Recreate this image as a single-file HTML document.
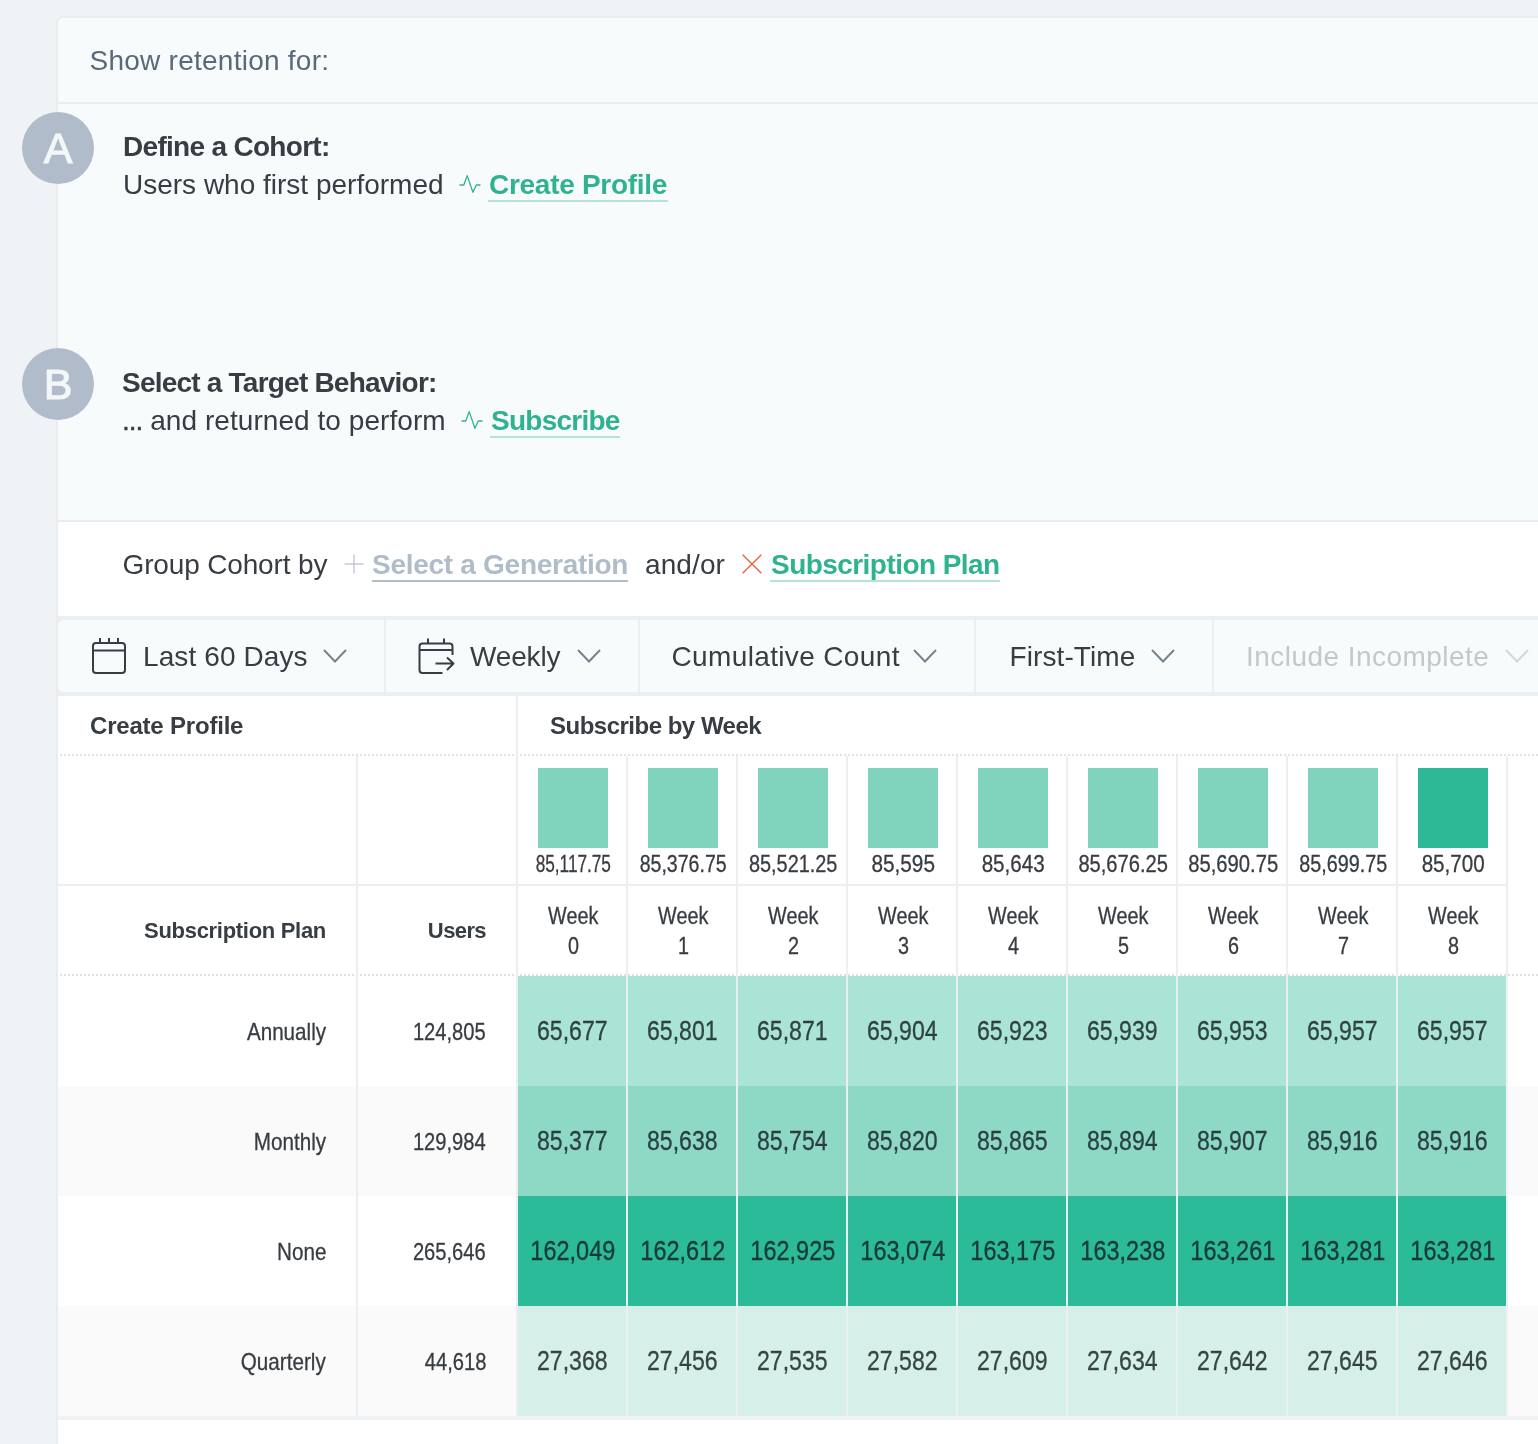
<!DOCTYPE html><html><head><meta charset="utf-8"><title>Retention</title><style>
*{box-sizing:border-box;margin:0;padding:0}
html,body{width:1538px;height:1444px;overflow:hidden}
body{background:#f0f3f5;font-family:"Liberation Sans",Arial,sans-serif;color:#373d42;position:relative;font-size:28px}
.abs{position:absolute}
.t{position:absolute;white-space:nowrap;line-height:1}
.panel{position:absolute;left:56px;top:16px;width:1500px;height:1500px;border:2px solid #e9edf0;border-radius:7px 0 0 0;background:#f8fbfc;overflow:hidden}
.hline{position:absolute;left:58px;right:0;height:2px;background:#e9edf0}
.white{position:absolute;left:58px;right:0;background:#fff}
.circle{position:absolute;left:22px;width:72px;height:72px;border-radius:50%;background:#b0bcc9;color:#f4f7f9;font-size:43px;text-align:center;line-height:73px;-webkit-text-stroke:1.1px #f4f7f9}
.b{font-weight:bold}
.green{color:#2fb28e}
.ul{position:absolute;height:2px}
.cn{display:inline-block;transform-origin:center center;white-space:nowrap;-webkit-text-stroke:0.3px currentColor}
.vl{position:absolute;width:2px;background:#eceff2}
.dot{position:absolute;height:2px;background-image:repeating-linear-gradient(90deg,transparent 0 2px,#dee1e5 2px 4px)}
.cell{position:absolute;width:108px;height:110px;padding-left:1px;text-align:center;line-height:110px;font-size:27px;color:rgba(22,32,36,.82)}
.c{position:absolute;text-align:center;white-space:nowrap}
.r{position:absolute;text-align:right;white-space:nowrap}
</style></head><body>
<div id="wrap" style="position:absolute;left:0;top:0;width:1538px;height:1444px;will-change:transform">
<div class="panel"></div>
<div class="t" style="left:89.5px;top:47px;color:#596979;letter-spacing:0.25px">Show retention for:</div>
<div class="hline" style="top:102px"></div>
<div class="circle" style="top:112px">A</div>
<div class="t b" style="left:123px;top:133px;letter-spacing:-0.7px">Define a Cohort:</div>
<div class="t" style="left:123px;top:171px">Users who first performed</div>
<svg class="abs" style="left:459px;top:174px" width="24" height="22" viewBox="0 0 24 22"><path d="M1 11 H4.8 L8.2 1.6 L13.9 18.3 L17.3 11 H21" fill="none" stroke="#2fb28e" stroke-width="1.3" stroke-linejoin="round" stroke-linecap="round"/></svg>
<div class="t b green" style="left:489px;top:171px;letter-spacing:-0.28px">Create Profile</div>
<div class="ul" style="left:488px;width:180px;top:200px;background:#b5e4d6"></div>
<div class="circle" style="top:348px">B</div>
<div class="t b" style="left:122px;top:369px;letter-spacing:-0.78px">Select a Target Behavior:</div>
<div class="t" style="left:122px;top:407px"><span style="letter-spacing:-1px;-webkit-text-stroke:0.4px currentColor">...</span><span style="letter-spacing:0.06px"> and returned to perform</span></div>
<svg class="abs" style="left:461px;top:410px" width="24" height="22" viewBox="0 0 24 22"><path d="M1 11 H4.8 L8.2 1.6 L13.9 18.3 L17.3 11 H21" fill="none" stroke="#2fb28e" stroke-width="1.3" stroke-linejoin="round" stroke-linecap="round"/></svg>
<div class="t b green" style="left:491px;top:407px;letter-spacing:-0.75px">Subscribe</div>
<div class="ul" style="left:490px;width:130px;top:436px;background:#b5e4d6"></div>
<div class="hline" style="top:520px"></div>
<div class="white" style="top:522px;height:94px"></div>
<div class="t" style="left:122.5px;top:551px;letter-spacing:-0.15px">Group Cohort by</div>
<svg class="abs" style="left:344px;top:554px" width="20" height="20" viewBox="0 0 20 20"><path d="M10 0.5V19.5M0.5 10H19.5" stroke="#c3ccd4" stroke-width="1.5" fill="none"/></svg>
<div class="t b" style="left:372px;top:551px;color:#b0bcc9;letter-spacing:-0.28px">Select a Generation</div>
<div class="ul" style="left:372px;width:256px;top:580px;background:#b0bcc9"></div>
<div class="t" style="left:645px;top:551px;letter-spacing:0.1px">and/or</div>
<svg class="abs" style="left:742px;top:554px" width="20" height="20" viewBox="0 0 20 20"><path d="M0.7 0.7L19.3 19.3M19.3 0.7L0.7 19.3" stroke="#e9633d" stroke-width="1.4" fill="none"/></svg>
<div class="t b green" style="left:771px;top:551px;letter-spacing:-0.55px">Subscription Plan</div>
<div class="ul" style="left:770px;width:230px;top:580px;background:#b5e4d6"></div>
<div class="abs" style="left:58px;top:616px;right:0;height:80px;background:#eceff2"></div>
<div class="abs" style="left:58px;top:620px;right:0;height:72px;background:#f8fbfc;border-radius:6px 0 0 6px"></div>
<div class="abs" style="left:384px;top:620px;width:2px;height:72px;background:#eceff2"></div>
<div class="abs" style="left:638px;top:620px;width:2px;height:72px;background:#eceff2"></div>
<div class="abs" style="left:974px;top:620px;width:2px;height:72px;background:#eceff2"></div>
<div class="abs" style="left:1212px;top:620px;width:2px;height:72px;background:#eceff2"></div>
<svg class="abs" style="left:90px;top:636px" width="38" height="40" viewBox="0 0 38 40"><g fill="none" stroke="#373d42" stroke-width="2"><rect x="3" y="7" width="32" height="30" rx="3"/><path d="M3 14.5H35M10 2V7M19 2V7M28 2V7"/></g></svg>
<div class="t" style="left:143px;top:643px;letter-spacing:0.1px">Last 60 Days</div>
<svg class="abs" style="left:323px;top:649px" width="24" height="14" viewBox="0 0 24 14"><path d="M1 1L12 12.5L23 1" fill="none" stroke="#76838f" stroke-width="2" stroke-linejoin="miter"/></svg>
<svg class="abs" style="left:416px;top:636px" width="40" height="40" viewBox="0 0 40 40"><g fill="none" stroke="#373d42" stroke-width="2" stroke-linejoin="round"><path d="M26.5 37H6.5Q3.5 37 3.5 34V10.5Q3.5 7.5 6.5 7.5H33.5Q36.5 7.5 36.5 10.5V19"/><path d="M3.5 14H36.5M12 2.5V7.5M28 2.5V7.5M19.5 27.5H37M31 21.5L37.5 27.5L31 34"/></g></svg>
<div class="t" style="left:470px;top:643px;letter-spacing:-0.15px">Weekly</div>
<svg class="abs" style="left:577px;top:649px" width="24" height="14" viewBox="0 0 24 14"><path d="M1 1L12 12.5L23 1" fill="none" stroke="#76838f" stroke-width="2" stroke-linejoin="miter"/></svg>
<div class="t" style="left:671.5px;top:643px;letter-spacing:0.36px">Cumulative Count</div>
<svg class="abs" style="left:913px;top:649px" width="24" height="14" viewBox="0 0 24 14"><path d="M1 1L12 12.5L23 1" fill="none" stroke="#76838f" stroke-width="2" stroke-linejoin="miter"/></svg>
<div class="t" style="left:1009.5px;top:643px;letter-spacing:0.1px">First-Time</div>
<svg class="abs" style="left:1151px;top:649px" width="24" height="14" viewBox="0 0 24 14"><path d="M1 1L12 12.5L23 1" fill="none" stroke="#76838f" stroke-width="2" stroke-linejoin="miter"/></svg>
<div class="t" style="left:1246px;top:643px;letter-spacing:0.46px;color:#c3c8cc">Include Incomplete</div>
<svg class="abs" style="left:1505px;top:649px" width="24" height="14" viewBox="0 0 24 14"><path d="M1 1L12 12.5L23 1" fill="none" stroke="#d3d8dc" stroke-width="2" stroke-linejoin="miter"/></svg>
<div class="white" style="top:696px;height:720px"></div>
<div class="abs" style="left:58px;right:0;top:1416px;height:4px;background:#eff2f4"></div>
<div class="white" style="top:1420px;height:30px"></div>
<div class="abs" style="left:58px;right:0;top:1086px;height:110px;background:#fafafa"></div>
<div class="abs" style="left:58px;right:0;top:1306px;height:110px;background:#fafafa"></div>
<div class="t b" style="left:90px;top:714px;font-size:24px;letter-spacing:-0.2px">Create Profile</div>
<div class="t b" style="left:550px;top:714px;font-size:24px;letter-spacing:-0.5px">Subscribe by Week</div>
<div class="dot" style="left:58px;right:0;top:754px"></div>
<div class="abs" style="left:58px;width:1450px;top:884px;height:2px;background:#eceff2"></div>
<div class="dot" style="left:58px;right:0;top:974px"></div>
<div class="vl" style="left:356px;top:756px;height:660px"></div>
<div class="vl" style="left:516px;top:696px;height:720px"></div>
<div class="vl" style="left:626px;top:756px;height:660px"></div>
<div class="vl" style="left:736px;top:756px;height:660px"></div>
<div class="vl" style="left:846px;top:756px;height:660px"></div>
<div class="vl" style="left:956px;top:756px;height:660px"></div>
<div class="vl" style="left:1066px;top:756px;height:660px"></div>
<div class="vl" style="left:1176px;top:756px;height:660px"></div>
<div class="vl" style="left:1286px;top:756px;height:660px"></div>
<div class="vl" style="left:1396px;top:756px;height:660px"></div>
<div class="vl" style="left:1506px;top:756px;height:220px"></div>
<div class="vl" style="left:1506px;top:976px;height:440px;background:#eff1f4"></div>
<div class="r b" style="left:58px;width:268px;top:918px;font-size:22px;line-height:26px;letter-spacing:-0.3px">Subscription Plan</div>
<div class="r b" style="left:358px;width:128px;top:918px;font-size:22px;line-height:26px;letter-spacing:-0.6px">Users</div>
<div class="abs" style="left:538px;top:768px;width:70px;height:80px;background:#80d4be"></div>
<div class="c" style="left:489px;width:168px;top:851px;font-size:23px;line-height:26px"><span class="cn" style="transform:scaleX(0.748);">85,117.75</span></div>
<div class="c" style="left:519px;width:108px;top:901px;font-size:23px;line-height:30px"><span class="cn" style="transform:scaleX(0.86);">Week</span><br><span class="cn" style="transform:scaleX(0.86);">0</span></div>
<div class="abs" style="left:648px;top:768px;width:70px;height:80px;background:#80d4be"></div>
<div class="c" style="left:599px;width:168px;top:851px;font-size:23px;line-height:26px"><span class="cn" style="transform:scaleX(0.85);">85,376.75</span></div>
<div class="c" style="left:629px;width:108px;top:901px;font-size:23px;line-height:30px"><span class="cn" style="transform:scaleX(0.86);">Week</span><br><span class="cn" style="transform:scaleX(0.86);">1</span></div>
<div class="abs" style="left:758px;top:768px;width:70px;height:80px;background:#80d4be"></div>
<div class="c" style="left:709px;width:168px;top:851px;font-size:23px;line-height:26px"><span class="cn" style="transform:scaleX(0.865);">85,521.25</span></div>
<div class="c" style="left:739px;width:108px;top:901px;font-size:23px;line-height:30px"><span class="cn" style="transform:scaleX(0.86);">Week</span><br><span class="cn" style="transform:scaleX(0.86);">2</span></div>
<div class="abs" style="left:868px;top:768px;width:70px;height:80px;background:#80d4be"></div>
<div class="c" style="left:819px;width:168px;top:851px;font-size:23px;line-height:26px"><span class="cn" style="transform:scaleX(0.903);">85,595</span></div>
<div class="c" style="left:849px;width:108px;top:901px;font-size:23px;line-height:30px"><span class="cn" style="transform:scaleX(0.86);">Week</span><br><span class="cn" style="transform:scaleX(0.86);">3</span></div>
<div class="abs" style="left:978px;top:768px;width:70px;height:80px;background:#80d4be"></div>
<div class="c" style="left:929px;width:168px;top:851px;font-size:23px;line-height:26px"><span class="cn" style="transform:scaleX(0.896);">85,643</span></div>
<div class="c" style="left:959px;width:108px;top:901px;font-size:23px;line-height:30px"><span class="cn" style="transform:scaleX(0.86);">Week</span><br><span class="cn" style="transform:scaleX(0.86);">4</span></div>
<div class="abs" style="left:1088px;top:768px;width:70px;height:80px;background:#80d4be"></div>
<div class="c" style="left:1039px;width:168px;top:851px;font-size:23px;line-height:26px"><span class="cn" style="transform:scaleX(0.875);">85,676.25</span></div>
<div class="c" style="left:1069px;width:108px;top:901px;font-size:23px;line-height:30px"><span class="cn" style="transform:scaleX(0.86);">Week</span><br><span class="cn" style="transform:scaleX(0.86);">5</span></div>
<div class="abs" style="left:1198px;top:768px;width:70px;height:80px;background:#80d4be"></div>
<div class="c" style="left:1149px;width:168px;top:851px;font-size:23px;line-height:26px"><span class="cn" style="transform:scaleX(0.88);">85,690.75</span></div>
<div class="c" style="left:1179px;width:108px;top:901px;font-size:23px;line-height:30px"><span class="cn" style="transform:scaleX(0.86);">Week</span><br><span class="cn" style="transform:scaleX(0.86);">6</span></div>
<div class="abs" style="left:1308px;top:768px;width:70px;height:80px;background:#80d4be"></div>
<div class="c" style="left:1259px;width:168px;top:851px;font-size:23px;line-height:26px"><span class="cn" style="transform:scaleX(0.86);">85,699.75</span></div>
<div class="c" style="left:1289px;width:108px;top:901px;font-size:23px;line-height:30px"><span class="cn" style="transform:scaleX(0.86);">Week</span><br><span class="cn" style="transform:scaleX(0.86);">7</span></div>
<div class="abs" style="left:1418px;top:768px;width:70px;height:80px;background:#2bb996"></div>
<div class="c" style="left:1369px;width:168px;top:851px;font-size:23px;line-height:26px"><span class="cn" style="transform:scaleX(0.896);">85,700</span></div>
<div class="c" style="left:1399px;width:108px;top:901px;font-size:23px;line-height:30px"><span class="cn" style="transform:scaleX(0.86);">Week</span><br><span class="cn" style="transform:scaleX(0.86);">8</span></div>
<div class="r" style="left:58px;width:268px;top:976px;height:110px;line-height:112px;font-size:24px"><span class="cn" style="transform:scaleX(0.86);transform-origin:right center">Annually</span></div>
<div class="r" style="left:358px;width:128px;top:976px;height:110px;line-height:112px;font-size:24px"><span class="cn" style="transform:scaleX(0.84);transform-origin:right center">124,805</span></div>
<div class="cell" style="left:518px;top:976px;background:#a9e4d5"><span class="cn" style="transform:scaleX(0.855);">65,677</span></div>
<div class="cell" style="left:628px;top:976px;background:#a9e4d5"><span class="cn" style="transform:scaleX(0.855);">65,801</span></div>
<div class="cell" style="left:738px;top:976px;background:#a9e4d5"><span class="cn" style="transform:scaleX(0.855);">65,871</span></div>
<div class="cell" style="left:848px;top:976px;background:#a9e4d5"><span class="cn" style="transform:scaleX(0.855);">65,904</span></div>
<div class="cell" style="left:958px;top:976px;background:#a9e4d5"><span class="cn" style="transform:scaleX(0.855);">65,923</span></div>
<div class="cell" style="left:1068px;top:976px;background:#a9e4d5"><span class="cn" style="transform:scaleX(0.855);">65,939</span></div>
<div class="cell" style="left:1178px;top:976px;background:#a9e4d5"><span class="cn" style="transform:scaleX(0.855);">65,953</span></div>
<div class="cell" style="left:1288px;top:976px;background:#a9e4d5"><span class="cn" style="transform:scaleX(0.855);">65,957</span></div>
<div class="cell" style="left:1398px;top:976px;background:#a9e4d5"><span class="cn" style="transform:scaleX(0.855);">65,957</span></div>
<div class="r" style="left:58px;width:268px;top:1086px;height:110px;line-height:112px;font-size:24px"><span class="cn" style="transform:scaleX(0.86);transform-origin:right center">Monthly</span></div>
<div class="r" style="left:358px;width:128px;top:1086px;height:110px;line-height:112px;font-size:24px"><span class="cn" style="transform:scaleX(0.84);transform-origin:right center">129,984</span></div>
<div class="cell" style="left:518px;top:1086px;background:#8dd9c5"><span class="cn" style="transform:scaleX(0.855);">85,377</span></div>
<div class="cell" style="left:628px;top:1086px;background:#8dd9c5"><span class="cn" style="transform:scaleX(0.855);">85,638</span></div>
<div class="cell" style="left:738px;top:1086px;background:#8dd9c5"><span class="cn" style="transform:scaleX(0.855);">85,754</span></div>
<div class="cell" style="left:848px;top:1086px;background:#8dd9c5"><span class="cn" style="transform:scaleX(0.855);">85,820</span></div>
<div class="cell" style="left:958px;top:1086px;background:#8dd9c5"><span class="cn" style="transform:scaleX(0.855);">85,865</span></div>
<div class="cell" style="left:1068px;top:1086px;background:#8dd9c5"><span class="cn" style="transform:scaleX(0.855);">85,894</span></div>
<div class="cell" style="left:1178px;top:1086px;background:#8dd9c5"><span class="cn" style="transform:scaleX(0.855);">85,907</span></div>
<div class="cell" style="left:1288px;top:1086px;background:#8dd9c5"><span class="cn" style="transform:scaleX(0.855);">85,916</span></div>
<div class="cell" style="left:1398px;top:1086px;background:#8dd9c5"><span class="cn" style="transform:scaleX(0.855);">85,916</span></div>
<div class="r" style="left:58px;width:268px;top:1196px;height:110px;line-height:112px;font-size:24px"><span class="cn" style="transform:scaleX(0.86);transform-origin:right center">None</span></div>
<div class="r" style="left:358px;width:128px;top:1196px;height:110px;line-height:112px;font-size:24px"><span class="cn" style="transform:scaleX(0.84);transform-origin:right center">265,646</span></div>
<div class="cell" style="left:518px;top:1196px;background:#2bbb98"><span class="cn" style="transform:scaleX(0.87);">162,049</span></div>
<div class="cell" style="left:628px;top:1196px;background:#2bbb98"><span class="cn" style="transform:scaleX(0.87);">162,612</span></div>
<div class="cell" style="left:738px;top:1196px;background:#2bbb98"><span class="cn" style="transform:scaleX(0.87);">162,925</span></div>
<div class="cell" style="left:848px;top:1196px;background:#2bbb98"><span class="cn" style="transform:scaleX(0.87);">163,074</span></div>
<div class="cell" style="left:958px;top:1196px;background:#2bbb98"><span class="cn" style="transform:scaleX(0.87);">163,175</span></div>
<div class="cell" style="left:1068px;top:1196px;background:#2bbb98"><span class="cn" style="transform:scaleX(0.87);">163,238</span></div>
<div class="cell" style="left:1178px;top:1196px;background:#2bbb98"><span class="cn" style="transform:scaleX(0.87);">163,261</span></div>
<div class="cell" style="left:1288px;top:1196px;background:#2bbb98"><span class="cn" style="transform:scaleX(0.87);">163,281</span></div>
<div class="cell" style="left:1398px;top:1196px;background:#2bbb98"><span class="cn" style="transform:scaleX(0.87);">163,281</span></div>
<div class="r" style="left:58px;width:268px;top:1306px;height:110px;line-height:112px;font-size:24px"><span class="cn" style="transform:scaleX(0.86);transform-origin:right center">Quarterly</span></div>
<div class="r" style="left:358px;width:128px;top:1306px;height:110px;line-height:112px;font-size:24px"><span class="cn" style="transform:scaleX(0.84);transform-origin:right center">44,618</span></div>
<div class="cell" style="left:518px;top:1306px;background:#d6f0e9"><span class="cn" style="transform:scaleX(0.855);">27,368</span></div>
<div class="cell" style="left:628px;top:1306px;background:#d6f0e9"><span class="cn" style="transform:scaleX(0.855);">27,456</span></div>
<div class="cell" style="left:738px;top:1306px;background:#d6f0e9"><span class="cn" style="transform:scaleX(0.855);">27,535</span></div>
<div class="cell" style="left:848px;top:1306px;background:#d6f0e9"><span class="cn" style="transform:scaleX(0.855);">27,582</span></div>
<div class="cell" style="left:958px;top:1306px;background:#d6f0e9"><span class="cn" style="transform:scaleX(0.855);">27,609</span></div>
<div class="cell" style="left:1068px;top:1306px;background:#d6f0e9"><span class="cn" style="transform:scaleX(0.855);">27,634</span></div>
<div class="cell" style="left:1178px;top:1306px;background:#d6f0e9"><span class="cn" style="transform:scaleX(0.855);">27,642</span></div>
<div class="cell" style="left:1288px;top:1306px;background:#d6f0e9"><span class="cn" style="transform:scaleX(0.855);">27,645</span></div>
<div class="cell" style="left:1398px;top:1306px;background:#d6f0e9"><span class="cn" style="transform:scaleX(0.855);">27,646</span></div>
</div></body></html>
